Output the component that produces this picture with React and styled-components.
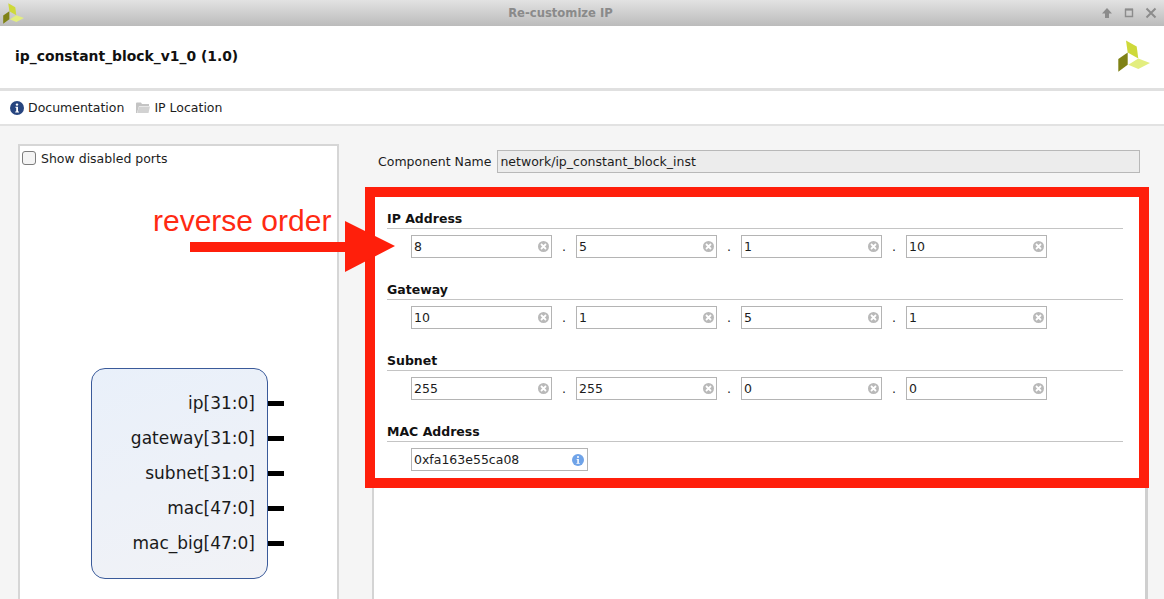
import React from "react";
import styled, { createGlobalStyle } from "styled-components";

const Global = createGlobalStyle`
  html, body {
    margin: 0;
    padding: 0;
    height: 100%;
    overflow: hidden;
    background: #f5f5f5;
    font-family: "DejaVu Sans", sans-serif;
    font-size: 12.5px;
    color: #1c1c1c;
  }
`;

const Window = styled.div`
  position: relative;
  width: 1164px;
  height: 599px;
  overflow: hidden;
  display: flex;
  flex-direction: column;
`;

const TitleBar = styled.div`
  height: 26px;
  flex: none;
  display: flex;
  align-items: center;
  padding: 0 7px 0 3px;
  background: linear-gradient(#e2e2e2, #bbbbbb);
`;

const TitleText = styled.div`
  flex: 1;
  text-align: center;
  padding-right: 4px;
  font-size: 11.6px;
  font-weight: bold;
  color: #8a8a8a;
`;

const WinButtons = styled.div`
  display: flex;
  align-items: center;
  gap: 10px;
  color: #8c8c8c;
`;

const Header = styled.div`
  height: 62px;
  box-sizing: border-box;
  flex: none;
  display: flex;
  align-items: center;
  justify-content: space-between;
  padding: 0 14px 3px 15px;
  background: #fff;
`;

const HeaderRule = styled.div`
  height: 3px;
  flex: none;
  background: #e0e0e0;
`;

const HeaderTitle = styled.div`
  font-size: 13.9px;
  font-weight: bold;
  color: #111;
`;

const Toolbar = styled.div`
  height: 33px;
  flex: none;
  display: flex;
  align-items: center;
  padding-left: 10px;
  gap: 12px;
  background: #fff;
  border-bottom: 2px solid #e2e2e2;
`;

const ToolItem = styled.div`
  display: flex;
  align-items: center;
  gap: 4px;
`;

const Body = styled.div`
  flex: 1;
  min-height: 0;
  display: flex;
  align-items: stretch;
  padding: 18px 16px 0 18px;
  gap: 33px;
`;

const SymbolPanel = styled.div`
  width: 321px;
  box-sizing: border-box;
  flex: none;
  background: #fff;
  border: 2px solid #d6d6d6;
  border-bottom: none;
  padding: 4px 0 0 2px;
`;

const CheckRow = styled.label`
  display: flex;
  align-items: center;
  gap: 5px;
  height: 16px;
`;

const CheckBox = styled.span`
  width: 12px;
  height: 12px;
  border: 1px solid #7d7d7d;
  border-radius: 3px;
  background: #f4f4f4;
`;

const Block = styled.div`
  width: 175px;
  height: 209px;
  margin: 202px 0 0 69px;
  border: 1px solid #3a5a9a;
  border-radius: 14px;
  background: linear-gradient(160deg, #e9f0fa, #f1f2f6);
`;

const PortList = styled.div`
  padding-top: 24px;
  display: flex;
  flex-direction: column;
  gap: 15px;
`;

const Port = styled.div`
  position: relative;
  height: 20px;
  line-height: 20px;
  padding-right: 12px;
  text-align: right;
  font-size: 17px;
  color: #1a1a1a;
  &::after {
    content: "";
    position: absolute;
    left: 176px;
    top: 8px;
    width: 16px;
    height: 5px;
    background: #000;
  }
`;

const RightCol = styled.div`
  flex: 1;
  min-width: 0;
  display: flex;
  flex-direction: column;
`;

const NameRow = styled.div`
  display: flex;
  align-items: center;
  gap: 6px;
  height: 23px;
  margin: 6px 8px 14px 6px;
`;

const NameInput = styled.input`
  flex: 1;
  min-width: 0;
  height: 23px;
  box-sizing: border-box;
  padding: 0 2px;
  border: 1px solid #b8b8b8;
  background: #ececec;
  font: inherit;
  color: #1c1c1c;
  outline: none;
`;

const OptionsPanel = styled.div`
  flex: 1;
  background: #fff;
  border-left: 2px solid #d4d4d4;
  border-right: 3px solid #cfcfcf;
`;

const RedBox = styled.div`
  margin: 0 -4px 0 -9px;
  height: 301px;
  box-sizing: border-box;
  border: 10px solid #ff1f0b;
  background: #fff;
  padding: 13px 16px 0 12px;
  display: flex;
  flex-direction: column;
  gap: 23px;
`;

const Group = styled.div`
  display: flex;
  flex-direction: column;
`;

const GroupTitle = styled.div`
  height: 19px;
  box-sizing: border-box;
  line-height: 18px;
  font-weight: bold;
  color: #111;
  border-bottom: 1px solid #c4c4c4;
`;

const Fields = styled.div`
  display: flex;
  align-items: center;
  margin: 6px 0 0 24px;
`;

const Field = styled.div`
  width: ${(p) => p.$width || 141}px;
  height: 23px;
  box-sizing: border-box;
  display: flex;
  align-items: center;
  padding-right: ${(p) => p.$pad || 1}px;
  border: 1px solid #b4b4b4;
  background: #fff;
`;

const FieldInput = styled.input`
  flex: 1;
  min-width: 0;
  border: none;
  outline: none;
  padding: 0 2px;
  font: inherit;
  color: #1c1c1c;
  background: transparent;
`;

const Dot = styled.span`
  width: 24px;
  text-align: center;
`;

const Callout = styled.div`
  position: absolute;
  left: 153px;
  top: 204px;
  font-family: "Liberation Sans", Arial, sans-serif;
  font-size: 30px;
  line-height: 34px;
  color: #ff2a12;
`;

const ArrowMark = styled.svg`
  position: absolute;
  left: 190px;
  top: 221px;
`;

const Logo = ({ size }) => (
  <svg width={size} height={size} viewBox="0 0 32 32">
    <path d="M8 0.5L18.7 6.5L20.3 18.5L9.7 12.5Z" fill="#ced93a" />
    <path d="M20.3 18.5L32 23L20.3 29L10.3 24.7Z" fill="#e3ee7f" />
    <path d="M9.7 12.5V24.7L0.3 31.7V19Z" fill="#7f8215" />
  </svg>
);

const ClearIcon = () => (
  <svg width="13" height="13" viewBox="0 0 13 13">
    <circle cx="6.5" cy="6.5" r="5.5" fill="#b9b9b9" />
    <path d="M4 4L9 9M9 4L4 9" stroke="#fff" strokeWidth="1.8" />
  </svg>
);

const InfoIcon = ({ size, fill }) => (
  <svg width={size} height={size} viewBox="0 0 14 14">
    <circle cx="7" cy="7" r="7" fill={fill} />
    <circle cx="7" cy="3.6" r="1.2" fill="#fff" />
    <path d="M5.4 5.8H8V10.4H9V11.4H5.2V10.4H6.2V6.8H5.4Z" fill="#fff" />
  </svg>
);

const FolderIcon = () => (
  <svg width="14" height="13" viewBox="0 0 14 13">
    <path d="M0 2.5Q0 1.5 1 1.5H5L6 3H13V5H3L1 12H0Z" fill="#c4c4c4" />
    <path d="M3 5.5H14L12.5 12H1.2Z" fill="#d2d2d2" />
  </svg>
);

const WinIcons = () => (
  <WinButtons>
    <svg width="12" height="12" viewBox="0 0 12 12">
      <path d="M6 1L11 6.5H8V11H4V6.5H1Z" fill="currentColor" />
    </svg>
    <svg width="12" height="12" viewBox="0 0 12 12">
      <path d="M2.5 2.5H9.5V9.5H2.5Z" fill="none" stroke="currentColor" strokeWidth="1.4" />
      <path d="M2 2.5H10" stroke="currentColor" strokeWidth="2" />
    </svg>
    <svg width="12" height="12" viewBox="0 0 12 12">
      <path d="M1.5 1.5L10.5 10.5M10.5 1.5L1.5 10.5" stroke="currentColor" strokeWidth="2" />
    </svg>
  </WinButtons>
);

const groups = [
  { title: "IP Address", values: ["8", "5", "1", "10"] },
  { title: "Gateway", values: ["10", "1", "5", "1"] },
  { title: "Subnet", values: ["255", "255", "0", "0"] },
];

const ports = ["ip[31:0]", "gateway[31:0]", "subnet[31:0]", "mac[47:0]", "mac_big[47:0]"];

const App = () => {
  return (
    <Window>
      <Global />
      <TitleBar>
        <Logo size={21} />
        <TitleText>Re-customize IP</TitleText>
        <WinIcons />
      </TitleBar>
      <Header>
        <HeaderTitle>ip_constant_block_v1_0 (1.0)</HeaderTitle>
        <Logo size={32} />
      </Header>
      <HeaderRule />
      <Toolbar>
        <ToolItem>
          <InfoIcon size={14} fill="#27457f" />
          Documentation
        </ToolItem>
        <ToolItem>
          <FolderIcon />
          IP Location
        </ToolItem>
      </Toolbar>
      <Body>
        <SymbolPanel>
          <CheckRow>
            <CheckBox />
            Show disabled ports
          </CheckRow>
          <Block>
            <PortList>
              {ports.map((p) => (
                <Port key={p}>{p}</Port>
              ))}
            </PortList>
          </Block>
        </SymbolPanel>
        <RightCol>
          <NameRow>
            Component Name
            <NameInput readOnly value="network/ip_constant_block_inst" />
          </NameRow>
          <OptionsPanel>
            <RedBox>
              {groups.map((g) => (
                <Group key={g.title}>
                  <GroupTitle>{g.title}</GroupTitle>
                  <Fields>
                    {g.values.map((v, i) => (
                      <React.Fragment key={i}>
                        {i > 0 && <Dot>.</Dot>}
                        <Field>
                          <FieldInput readOnly value={v} />
                          <ClearIcon />
                        </Field>
                      </React.Fragment>
                    ))}
                  </Fields>
                </Group>
              ))}
              <Group>
                <GroupTitle>MAC Address</GroupTitle>
                <Fields>
                  <Field $width={177} $pad={3}>
                    <FieldInput readOnly value="0xfa163e55ca08" />
                    <InfoIcon size={12} fill="#6fa3e8" />
                  </Field>
                </Fields>
              </Group>
            </RedBox>
          </OptionsPanel>
        </RightCol>
      </Body>
      <Callout>reverse order</Callout>
      <ArrowMark width="206" height="51" viewBox="0 0 206 51">
        <path d="M0 21H155V0L205 25L155 51V31H0Z" fill="#ff1f0b" />
      </ArrowMark>
    </Window>
  );
};

export default App;
